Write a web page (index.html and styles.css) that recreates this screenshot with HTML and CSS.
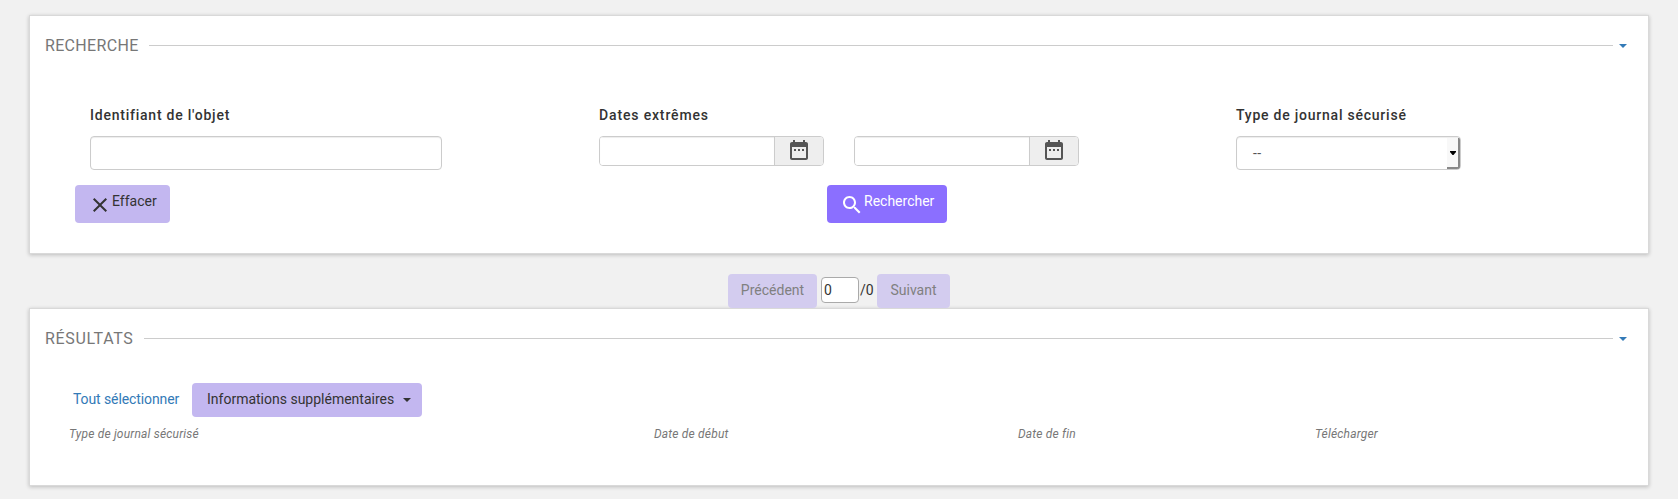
FILE: index.html
```html
<!DOCTYPE html>
<html lang="fr">
<head>
<meta charset="utf-8">
<title>Journaux sécurisés</title>
<link rel="stylesheet" href="styles.css">
</head>
<body>
<section class="panel search">
  <header class="panel-head"><h2>RECHERCHE</h2><span class="rule"></span><svg class="caret" width="8" height="4" viewBox="0 0 8 4"><path d="M0 0h8L4 4z"/></svg></header>
  <div class="fields">
    <div class="field field-id"><label for="oid">Identifiant de l'objet</label><input id="oid" class="control" type="text"></div>
    <div class="field field-dates"><label>Dates extrêmes</label>
      <div class="dates">
        <div class="date-group"><input type="text"><span class="addon"><svg width="24" height="24" viewBox="0 0 24 24"><path d="M9 11H7v2h2v-2zm4 0h-2v2h2v-2zm4 0h-2v2h2v-2zm2-7h-1V2h-2v2H8V2H6v2H5c-1.100 0-2 .9-2 2v14c0 1.100.9 2 2 2h14c1.100 0 2-.9 2-2V6c0-1.100-.9-2-2-2zm0 16H5V9h14v11z"/></svg></span></div>
        <div class="date-group"><input type="text"><span class="addon"><svg width="24" height="24" viewBox="0 0 24 24"><path d="M9 11H7v2h2v-2zm4 0h-2v2h2v-2zm4 0h-2v2h2v-2zm2-7h-1V2h-2v2H8V2H6v2H5c-1.100 0-2 .9-2 2v14c0 1.100.9 2 2 2h14c1.100 0 2-.9 2-2V6c0-1.100-.9-2-2-2zm0 16H5V9h14v11z"/></svg></span></div>
      </div>
    </div>
    <div class="field field-type"><label>Type de journal sécurisé</label>
      <div class="select"><span class="value">--</span><span class="drop"><svg width="6" height="4" viewBox="0 0 6 4"><path d="M0 0h6v1L3.500 4h-1L0 1z"/></svg></span></div>
    </div>
  </div>
  <div class="actions">
    <button class="btn icon-btn clear"><svg width="24" height="24" viewBox="0 0 24 24"><path d="M19 6.410L17.590 5 12 10.590 6.410 5 5 6.410 10.590 12 5 17.590 6.410 19 12 13.410 17.590 19 19 17.590 13.410 12z"/></svg><span>Effacer</span></button>
    <button class="btn icon-btn find"><svg width="24" height="24" viewBox="0 0 24 24"><path d="M15.500 14h-.79l-.28-.27C15.410 12.590 16 11.110 16 9.500 16 5.910 13.090 3 9.500 3S3 5.910 3 9.500 5.910 16 9.500 16c1.610 0 3.090-.59 4.230-1.570l.27.28v.79l5 4.990L20.490 19l-4.990-5zm-6 0C7.010 14 5 11.990 5 9.500S7.010 5 9.500 5 14 7.010 14 9.500 11.990 14 9.500 14z"/></svg><span>Rechercher</span></button>
  </div>
</section>
<nav class="pager"><button class="btn prev" disabled>Précédent</button><input class="page" type="text" value="0"><span class="total">/0</span><button class="btn next" disabled>Suivant</button></nav>
<section class="panel results">
  <header class="panel-head"><h2>RÉSULTATS</h2><span class="rule"></span><svg class="caret" width="8" height="4" viewBox="0 0 8 4"><path d="M0 0h8L4 4z"/></svg></header>
  <div class="toolbar"><a class="select-all">Tout sélectionner</a><button class="btn more"><span>Informations supplémentaires</span><svg width="8" height="4" viewBox="0 0 8 4"><path d="M0 0h8L4 4z"/></svg></button></div>
  <div class="columns"><span>Type de journal sécurisé</span><span>Date de début</span><span>Date de fin</span><span>Télécharger</span></div>
</section>
</body>
</html>
```
FILE: styles.css
```css
* { box-sizing: border-box; }
body { margin: 0; padding: 15px 29px 0; height: 499px; overflow: hidden; background: #f1f1f1; color: #333; font: 14px/20px Roboto, sans-serif; }
input, button { font: inherit; color: inherit; margin: 0; }
svg { display: block; flex: none; fill: currentColor; }
.panel { background: #fff; border: 1px solid #d9d9d9; box-shadow: 0 1px 4px rgba(0, 0, 0, .22); }
.search { height: 239px; }
.results { height: 178px; }
.panel-head { display: flex; align-items: center; height: 20px; margin: 19px 21px 0 15px; }
.panel-head h2 { margin: 0; padding-top: 1px; font-size: 16px; font-weight: 400; line-height: 21px; letter-spacing: .33px; color: #777; }
.results .panel-head h2 { letter-spacing: .65px; }
.rule { flex: 1; height: 1px; margin: 0 6px 0 10.500px; background: #ccc; }
.caret { color: #337ab7; margin-top: 1px; }
.fields { display: flex; margin: 50px 0 0 60px; height: 80px; }
.field label { display: block; height: 20px; margin-bottom: 11px; font-weight: 500; letter-spacing: .77px; line-height: 20px; }
.field-id { width: 509px; }
.field-dates { width: 637px; }
.field-dates label { letter-spacing: .85px; }
.control { display: block; width: 352px; height: 34px; border: 1px solid #ccc; border-radius: 4px; box-shadow: inset 0 1px 1px rgba(0, 0, 0, .075); }
.dates { display: flex; gap: 30px; }
.date-group { display: flex; width: 225px; height: 30px; border: 1px solid #ccc; border-radius: 4px; overflow: hidden; }
.date-group input { width: 174px; height: 28px; border: 0; padding: 5px 10px; box-shadow: inset 0 1px 1px rgba(0, 0, 0, .075); }
.addon { flex: 1; display: flex; justify-content: center; padding-top: 1px; background: #eee; border-left: 1px solid #ccc; color: #555; }
.select { display: flex; justify-content: space-between; width: 225px; height: 34px; padding-left: 16px; border: 1px solid #ccc; border-radius: 4px; overflow: hidden; box-shadow: inset 0 1px 1px rgba(0, 0, 0, .075); color: #555; }
.value { line-height: 32px; letter-spacing: .4px; }
.drop { display: flex; align-items: center; justify-content: center; width: 13px; margin-top: 1px; background: #f8f8f8; border-right: 2px solid #888; border-bottom: 2px solid #888; color: #000; }
.actions { display: flex; margin-left: 45px; }
.btn { display: flex; border: 0; border-radius: 4px; padding: 7px 13px; height: 34px; background: #c3b7f0; line-height: 20px; white-space: nowrap; }
.icon-btn { height: 38px; padding: 6px 0 0 13px; }
.icon-btn svg { margin-top: 2px; }
.clear { width: 95px; margin-right: 657px; }
.find { width: 120px; background: #8b6fff; color: #fff; }
.pager { display: flex; width: 222px; height: 34px; margin: 20px auto 0; }
.pager .btn { background: #d3ccef; color: #808080; justify-content: center; padding: 6px 0; }
.prev { width: 89px; margin-right: 4px; }
.page { width: 38px; height: 26px; margin-top: 3px; padding: 0 2px; border: 1px solid #aaa; border-radius: 4px; background: #fff; }
.total { width: 18px; padding-left: 1px; line-height: 32px; }
.next { width: 73px; }
.toolbar { display: flex; margin: 35px 0 0 43px; }
.select-all { width: 119px; line-height: 32px; letter-spacing: -.1px; color: #337ab7; }
.more { width: 230px; padding: 6px 11px 0 15px; justify-content: space-between; }
.more svg { margin-top: 9px; }
.columns { display: grid; grid-template-columns: 585px 364px 297px 1fr; margin: 7px 0 0 39px; font-size: 12px; font-style: italic; line-height: 20px; letter-spacing: .19px; color: #777; }
```
